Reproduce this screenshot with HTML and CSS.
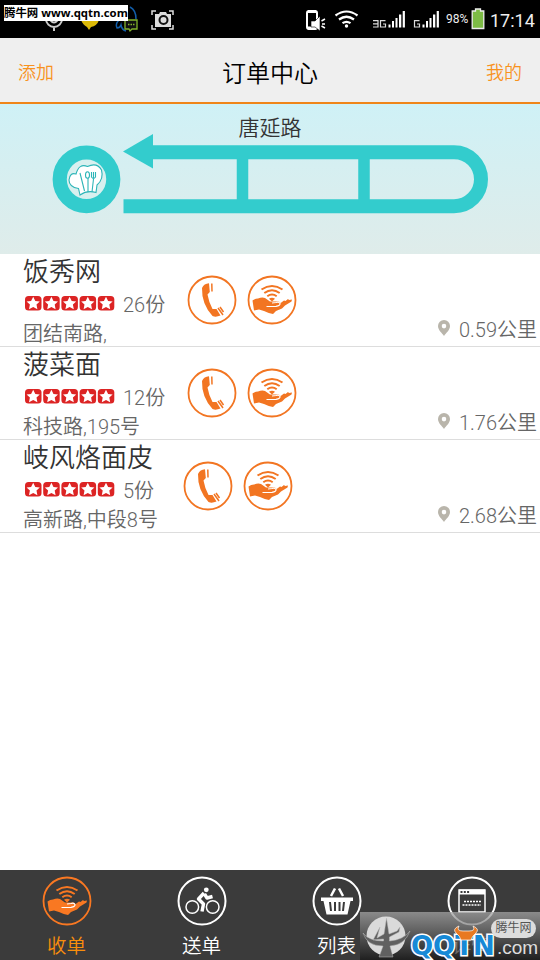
FILE: index.html
```html
<!DOCTYPE html>
<html lang="zh-CN">
<head>
<meta charset="utf-8">
<title>订单中心</title>
<link rel="stylesheet" href="styles.css">
</head>
<body>
<svg class="defs" width="0" height="0">
  <symbol id="hand" viewBox="0 0 50 50">
    <circle cx="25" cy="25" r="23.5" fill="none" stroke="currentColor" stroke-width="1.800"/>
    <g fill="none" stroke="currentColor" stroke-width="2">
      <path d="M14.500 14.500Q25 7.500 35.500 14.500M17.300 18Q25 12.500 32.700 18M20.300 21.200Q25 17.800 29.700 21.200"/>
    </g>
    <path d="M22 23.800Q25 21.800 28 23.800L25 26.500Z" fill="currentColor"/>
    <path d="M5.500 25.500Q8 23.500 11 23.500Q15 22 18 23L23 26.500H31Q34 27 33 28.500L37 25.500L38.500 26L41 24L42 25L45 24.500L44.500 26.500L38 30.500L35 33.500L29 36L26 39Q22 38.500 17 36L12 34.500L7 35.500Z" fill="currentColor"/>
    <path d="M19.500 31.500L29 31.300Q33.500 30.500 33 28.500Q32 26.500 29 27.500L25 28" class="palm"/>
  </symbol>
  <symbol id="phone" viewBox="0 0 50 50">
    <circle cx="25" cy="25" r="23.500" fill="none" stroke="currentColor" stroke-width="1.800"/>
    <path d="M15 13Q17 8.500 22 8.200L22.800 17L20.500 19.500Q22 28 25.500 34L29.500 34L33.500 40.500Q29 42.500 25.500 41Q14.500 29 15 13Z" fill="currentColor"/>
    <path d="M24.800 8.500L25 16.500M31 33L36 40M33 32L36.500 37" fill="none" stroke="currentColor" stroke-width="1.500"/>
  </symbol>
  <symbol id="stars" viewBox="0 0 92 17">
    <g id="star"><rect x="1" y="1" width="16.500" height="14.500" rx="3.500" fill="#dc2424"/><path d="M9.200 1.800L11.300 6L15.800 6.500L12.500 9.600L13.400 14.200L9.200 12L5 14.200L5.900 9.600L2.600 6.500L7.100 6Z" fill="#fff"/></g>
    <use href="#star" x="18.200"/><use href="#star" x="36.400"/><use href="#star" x="54.600"/><use href="#star" x="72.800"/>
  </symbol>
  <symbol id="pin" viewBox="0 0 14 18"><path fill-rule="evenodd" d="M7 1A6 6 0 0 0 1 7C1 11 5 14 7 17C9 14 13 11 13 7A6 6 0 0 0 7 1ZM7 4.800A2.300 2.300 0 1 1 7 9.400A2.300 2.300 0 1 1 7 4.800Z" fill="#b9b5ab"/></symbol>
</svg>

<div class="screen">
  <div class="status">
    <svg class="notices" width="180" height="38" viewBox="0 0 180 38">
      <path d="M46 19A8 8 0 0 0 62 19M54 26V31M50 20Q54 25 58 20" fill="none" stroke="#ccc" stroke-width="2"/>
      <path d="M81 20H99Q97 26 91 27L89 30L87 27Q83 25 81 20Z" fill="#dcba08"/>
      <path d="M130 7Q136 10 136 19M119 20Q115 24 117 28Q120 28 121 25Q122 30 126 31" fill="none" stroke="#125eaa" stroke-width="1.500"/>
      <path d="M125 20H137V29H132L130 31L129 29H125Z" fill="#111" stroke="#82b42c" stroke-width="1.300"/>
      <path d="M128 24.500H135" stroke="#82b42c" stroke-width="1.500" stroke-dasharray="1.500 1"/>
      <path d="M152 15V11H156M169 11H173V15M173 25V29H169M156 29H152V25" fill="none" stroke="#ddd" stroke-width="1.500"/>
      <path d="M155 14H159L160 12H166L167 14H171V27H155Z" fill="#ddd"/><circle cx="163.500" cy="20" r="4" fill="none" stroke="#111" stroke-width="2"/>
    </svg>
    <span class="url-tag">腾牛网 www.qqtn.com</span>
    <svg class="signals" width="140" height="38" viewBox="300 0 140 38">
      <rect x="307" y="11" width="10" height="18" rx="2" fill="none" stroke="#fff" stroke-width="2"/><path d="M308 11.500H316M308 28H316" stroke="#fff" stroke-width="3"/>
      <path d="M311 21H315L320 16V31L315 27H311Z" fill="#fff" stroke="#000" stroke-width=".6"/><path d="M321.500 21L325 19M322 24H325M321.500 26L325 28" stroke="#fff" stroke-width="1.500"/>
      <path d="M335.500 15.500Q346.500 7.500 357.500 15.500M339 19.500Q346.500 14 354 19.500M342.500 23.200Q346.500 20.400 350.500 23.200" fill="none" stroke="#fff" stroke-width="2.200"/><circle cx="346.500" cy="26" r="1.700" fill="#fff"/>
      <g fill="none" stroke="#ddd" stroke-width="1.200"><path d="M373 20.600H378V27H373M373 23.800H378M385.500 20.600H380.500V27H385.500V24H383M419.500 20.600H414.500V27H419.500V24H417"/></g>
      <g id="bars" fill="#fff"><rect x="388.500" y="24.500" width="2" height="3"/><rect x="392" y="21" width="2" height="6.500"/><rect x="395.500" y="18" width="2" height="9.500"/><rect x="399" y="14.500" width="2.300" height="13"/><rect x="402.700" y="11" width="2.200" height="16.500"/></g>
      <use href="#bars" x="34"/>
    </svg>
    <span class="percent">98%</span>
    <svg class="battery" width="14" height="22" viewBox="0 0 14 22"><path d="M4.500 3V1H9.500V3H12.800V20.500H1.200V3Z" fill="#7dbb45" stroke="#eee" stroke-width="1.300"/></svg>
    <span class="clock">17:14</span>
  </div>

  <header class="bar"><a>添加</a><h1>订单中心</h1><a>我的</a></header>

  <section class="route">
    <div class="road">唐延路</div>
    <svg class="track" width="540" height="85" viewBox="0 131 540 85">
      <path d="M148 152.200H454A27 27 0 0 1 454 206.200H123.500" fill="none" stroke="#33cccd" stroke-width="14"/>
      <path d="M242.500 155V203M364 155V203" stroke="#33cccd" stroke-width="11.500"/>
      <path d="M123 151.500L153 134V168.500Z" fill="#33cccd"/>
      <circle cx="86.500" cy="179.300" r="26.800" fill="#d8f0ef" stroke="#33cccd" stroke-width="14.200"/>
      <g stroke="#2db5b8" fill="#fff" stroke-width="1.100">
        <path d="M80 195L78.500 188.500Q69 187 69 180Q70 172 76 174Q79 163 87.500 166.500Q97 162 101.500 170Q104 179 97 185L96 192.500Q87 190 80 195Z"/>
        <path d="M80 173L84.500 191M88 178V192M93.500 179L92 192M91.500 172V177Q93.500 180 95.500 177V172M93.500 172V178" fill="none"/>
        <ellipse cx="87.500" cy="175" rx="2" ry="3.300"/>
      </g>
    </svg>
  </section>

  <main class="list">
    <article class="shop">
      <div class="info"><h2>饭秀网</h2><div class="rating"><svg class="stars"><use href="#stars"/></svg><span>26份</span></div><p>团结南路,</p></div>
      <div class="actions"><svg><use href="#phone"/></svg><svg><use href="#hand"/></svg></div>
      <div class="distance"><svg><use href="#pin"/></svg>0.59公里</div>
    </article>
    <article class="shop">
      <div class="info"><h2>菠菜面</h2><div class="rating"><svg class="stars"><use href="#stars"/></svg><span>12份</span></div><p>科技路,195号</p></div>
      <div class="actions"><svg><use href="#phone"/></svg><svg><use href="#hand"/></svg></div>
      <div class="distance"><svg><use href="#pin"/></svg>1.76公里</div>
    </article>
    <article class="shop narrow">
      <div class="info"><h2>岐风烙面皮</h2><div class="rating"><svg class="stars"><use href="#stars"/></svg><span>5份</span></div><p>高新路,中段8号</p></div>
      <div class="actions"><svg><use href="#phone"/></svg><svg><use href="#hand"/></svg></div>
      <div class="distance"><svg><use href="#pin"/></svg>2.68公里</div>
    </article>
  </main>

  <nav class="tabs">
    <a class="active"><svg viewBox="0 0 50 50"><use href="#hand"/></svg>收单</a>
    <a><svg viewBox="0 0 50 50"><circle cx="25" cy="25" r="23.500" fill="none" stroke="#fff" stroke-width="2"/>
      <g fill="none" stroke="#fff" stroke-width="1.500"><circle cx="15.300" cy="31" r="6.300"/><circle cx="35.700" cy="31" r="6.300"/></g>
      <circle cx="29.300" cy="13.800" r="2.400" fill="#fff"/><path d="M27 17L21.500 23L26.500 28L25 35.500M27.500 18L30 22L35.500 20.500" fill="none" stroke="#fff" stroke-width="3.400" stroke-linejoin="round"/></svg>送单</a>
    <a><svg viewBox="0 0 50 50"><circle cx="25" cy="25" r="23.500" fill="none" stroke="#fff" stroke-width="2"/>
      <path d="M19 20L23 12.500M31 20L27 12.500" stroke="#fff" stroke-width="2.500"/><path d="M9 21.500H41V25H38.500L35.500 38.500H14.500L11.500 25H9Z" fill="#fff"/><path d="M18 26L19 35M23 26V35M27.500 26V35M32 26L31 35" stroke="#3b3b3b" stroke-width="2"/></svg>列表</a>
    <a><svg viewBox="0 0 50 50"><circle cx="25" cy="25" r="23.500" fill="none" stroke="#fff" stroke-width="2"/>
      <path d="M12 14H38V36H12Z" fill="none" stroke="#fff" stroke-width="1.500"/><path d="M12 13.500H38V18.500H12Z" fill="#fff"/><path d="M13.500 16H23" stroke="#3b3b3b" stroke-width="1.800" stroke-dasharray="2 1.300"/><path d="M17 25.500H34M15.500 29H34" stroke="#fff" stroke-width="1.500" stroke-dasharray="2 1"/></svg>详情</a>
  </nav>

  <div class="watermark">
    <svg class="mark" width="50" height="46" viewBox="0 0 50 46"><circle cx="25" cy="23" r="19.500" fill="#dadada"/><path d="M2 20Q6 33 22 33L18 44H32L29 33Q44 32 49 18Q42 27 28.500 28V24L38 19L39 14L36 18L28 21L25.500 5L23 21L16 25L19 14L12 27L22.500 26V28Q8 28 2 20Z" fill="#606060" stroke="#bbb" stroke-width=".5"/></svg>
    <span class="brand">QQTN</span>
    <span class="com">.com</span>
    <span class="pill">腾牛网</span>
    <svg class="horns" width="26" height="16" viewBox="0 0 26 16"><path d="M6 1Q-1 4 3 8Q7 11 8 15H18Q19 11 23 8Q27 4 20 1Q23 6 16 6H10Q3 6 6 1Z" fill="#e87922" stroke="#fff" stroke-width=".7"/></svg>
  </div>
</div>
</body>
</html>
```
FILE: styles.css
```css
* { box-sizing: border-box; }
body { margin: 0; background: #fff; font-family: Roboto, "Noto Sans CJK SC", sans-serif; font-weight: 350; }
h1, h2, p { margin: 0; font-weight: 350; }
.defs { position: absolute; }
.screen { position: relative; width: 540px; height: 960px; display: flex; flex-direction: column; overflow: hidden; }
.status { position: relative; height: 38px; background: #000; color: #eee; display: flex; align-items: center; flex: none; }
.notices { margin-right: auto; }
.url-tag { position: absolute; left: 4px; top: 5px; width: 124px; height: 16px; background: #fff; color: #000; font: 700 11.4px/16px "Open Sans", "Noto Sans CJK SC", sans-serif; white-space: nowrap; }
.signals { flex: none; }
.percent { width: 31px; padding-left: 6px; font-size: 12px; font-weight: 400; white-space: nowrap; }
.battery { flex: none; }
.clock { width: 55px; padding: 2px 0 0 5px; font-size: 18px; font-weight: 400; white-space: nowrap; }
.bar { height: 66px; flex: none; background: #efefef; border-bottom: 2px solid #ef8519; display: flex; justify-content: space-between; align-items: center; padding: 2px 18px 0; }
.bar a { color: #f8921e; font-size: 18px; }
.bar h1 { font-size: 24px; color: #000; }
.route { height: 150px; flex: none; background: linear-gradient(#cff1f6, #dfecea); }
.road { height: 27px; padding-top: 9px; line-height: 30px; font-size: 21px; text-align: center; color: #333; }
.track { display: block; }
.shop { height: 93px; border-bottom: 1px solid #ddd; display: flex; padding-left: 23px; color: #666; }
.info { width: 164px; flex: none; padding-top: 1px; white-space: nowrap; }
.narrow .info { width: 160px; }
.info h2 { font-size: 26px; line-height: 34px; color: #333; }
.rating { display: flex; align-items: center; height: 30px; font-size: 20px; }
.rating span { line-height: 30px; padding: 2px 0 0 7px; }
.stars { width: 92px; height: 17px; margin: 0 0 2px 1px; }
.info p { font-size: 20px; line-height: 30px; }
.actions { display: flex; gap: 10px; padding-top: 21px; color: #f27522; }
.actions svg { width: 50px; height: 50px; }
.palm { fill: none; stroke: #fff; stroke-width: 1.2; }
.active .palm { stroke: #3b3b3b; }
.distance { margin-left: auto; padding: 0 3px 1px 0; align-self: flex-end; display: flex; align-items: center; font-size: 20px; line-height: 30px; }
.distance svg { width: 14px; height: 18px; margin: 0 8px 4px 0; }
.tabs { height: 90px; margin-top: auto; flex: none; background: #3b3b3b; color: #fff; display: grid; grid-template-columns: repeat(4, 135px); }
.tabs a { display: flex; flex-direction: column; align-items: center; padding: 6px 2px 0 0; font-size: 19.5px; line-height: 28px; }
.tabs svg { width: 50px; height: 50px; margin-bottom: 7px; flex: none; }
.tabs .active { color: #f98e0c; }
.tabs .active svg { color: #f97822; }
.watermark { position: absolute; left: 360px; top: 912px; width: 180px; height: 48px; background: linear-gradient(rgba(165,165,165,.75), rgba(20,20,20,.7)); }
.mark { position: absolute; left: 1px; top: 1px; }
.brand { position: absolute; left: 51px; top: 20px; font: 700 26px/28px "DejaVu Sans", sans-serif; color: #1689d6; -webkit-text-stroke: 3px #fff; paint-order: stroke fill; }
.com { position: absolute; left: 137px; top: 22px; font: 400 19px/28px "Liberation Sans", sans-serif; color: #ddd; }
.pill { position: absolute; left: 131px; top: 7px; width: 45px; height: 19px; border-radius: 10px; background: #ddd; color: #555; font-size: 12px; line-height: 19px; text-align: center; font-weight: 400; }
.horns { position: absolute; left: 93px; top: 13px; }
```
